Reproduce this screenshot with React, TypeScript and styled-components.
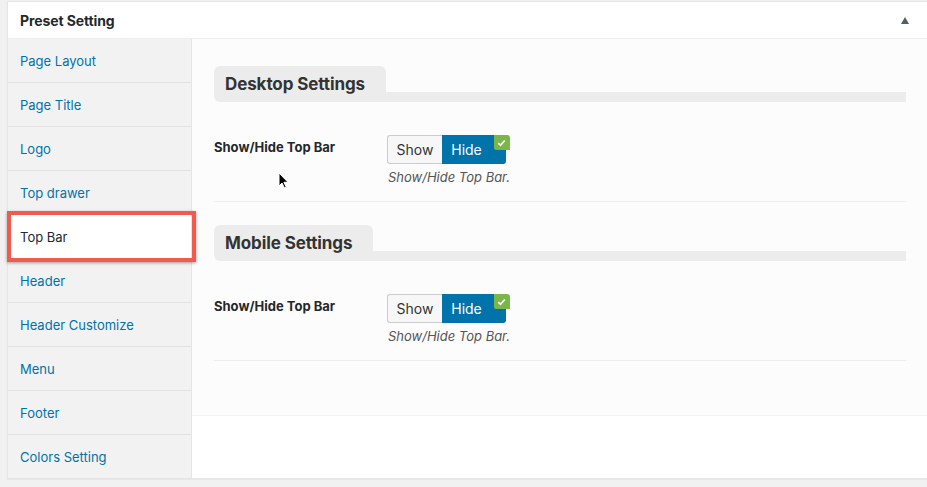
import React from "react";
import styled, { createGlobalStyle } from "styled-components";

const Global = createGlobalStyle`
  html, body { margin: 0; padding: 0; }
  body {
    background: #f1f1f1;
    font-family: Inter, "Liberation Sans", Arial, sans-serif;
    font-size: 13px;
    color: #23282d;
    overflow: hidden;
    width: 927px;
    height: 487px;
  }
`;

const Page = styled.div`
  padding: 1px 0 0 7px;
`;

const Panel = styled.div`
  width: 930px;
  background: #fff;
  border: 1px solid #e5e5e5;
  border-right: none;
  box-shadow: 0 1px 1px rgba(0, 0, 0, 0.04);
`;

const PanelHeader = styled.div`
  height: 36px;
  display: flex;
  align-items: center;
  justify-content: space-between;
  padding: 0 20px 0 12px;
  border-bottom: 1px solid #eee;
`;

const PanelTitle = styled.h2`
  margin: 0;
  font-size: 14px;
  font-weight: 700;
  color: #23282d;
  letter-spacing: -0.1px;
`;

const Toggle = styled.span`
  width: 0;
  height: 0;
  border-left: 4.5px solid transparent;
  border-right: 4.5px solid transparent;
  border-bottom: 7px solid #555d66;
  margin-right: 9px;
  margin-top: 1px;
`;

const Body = styled.div`
  display: flex;
  align-items: stretch;
`;

const Sidebar = styled.ul`
  list-style: none;
  margin: 0;
  padding: 0;
  width: 183px;
  flex: none;
  background: #f2f2f2;
  border-right: 1px solid #e5e5e5;
`;

const NavItem = styled.li<{ $active?: boolean }>`
  position: relative;
  height: 43px;
  display: flex;
  align-items: center;
  padding-left: 12px;
  border-bottom: 1px solid #e2e2e2;
  background: ${(p) => (p.$active ? "#fff" : "transparent")};
  color: ${(p) => (p.$active ? "#23282d" : "#0073aa")};
  font-size: 13px;
  &:last-child { border-bottom: none; }
`;

const Highlight = styled.span`
  position: absolute;
  z-index: 3;
  left: -1px;
  right: -5px;
  top: -4px;
  bottom: -4px;
  border: 4px solid #f25b4b;
  box-shadow: 0 1px 3px rgba(0, 0, 0, 0.35);
  pointer-events: none;
`;

const Main = styled.div`
  flex: 1;
  background: #fff;
`;

const Content = styled.div`
  position: relative;
  background: #fcfcfc;
  border-bottom: 1px solid #f3f3f3;
  padding: 27px 32px 54px 22px;
`;

const Section = styled.section`
  & + & { margin-top: 23px; }
`;

const Heading = styled.div`
  display: flex;
  align-items: flex-end;
  margin-bottom: 33px;
`;

const HeadingTab = styled.h3`
  margin: 0;
  height: 36px;
  line-height: 36px;
  padding: 0 21px 0 11px;
  background: #ececec;
  border-radius: 6px 6px 0 6px;
  font-size: 17px;
  font-weight: 700;
  color: #333;
  letter-spacing: -0.1px;
`;

const HeadingBar = styled.div`
  flex: 1;
  height: 10px;
  background: #ececec;
`;

const Row = styled.div`
  display: flex;
  align-items: flex-start;
  padding-bottom: 16px;
  border-bottom: 1px solid #eee;
`;

const Label = styled.div`
  width: 173px;
  font-weight: 700;
  font-size: 13px;
  color: #23282d;
  padding-top: 4px;
`;

const Field = styled.div`
  display: flex;
  flex-direction: column;
  gap: 5px;
`;

const ButtonGroup = styled.div`
  display: flex;
  position: relative;
  height: 29px;
`;

const SegButton = styled.button<{ $on?: boolean }>`
  font-family: inherit;
  font-size: 14px;
  height: 29px;
  margin: 0;
  cursor: pointer;
  border: 1px solid ${(p) => (p.$on ? "#0073aa" : "#ccc")};
  background: ${(p) => (p.$on ? "#0073aa" : "#f7f7f7")};
  color: ${(p) => (p.$on ? "#fff" : "#333")};
  width: ${(p) => (p.$on ? "64px" : "55px")};
  padding: ${(p) => (p.$on ? "0 14px 0 0" : "0")};
  border-radius: ${(p) => (p.$on ? "0 3px 3px 0" : "3px 0 0 3px")};
  ${(p) => (p.$on ? "border-left: none;" : "border-right: none;")}
`;

const Check = styled.span`
  position: absolute;
  top: 0;
  right: 0;
  width: 16px;
  height: 15px;
  background: #7ab648;
  border-radius: 0 3px 0 2px;
  display: flex;
  align-items: center;
  justify-content: center;
`;

const Description = styled.p`
  margin: 0;
  font-style: italic;
  font-size: 13px;
  color: #555;
  padding-left: 1px;
`;

const Cursor = styled.svg`
  position: absolute;
  left: 86px;
  top: 133px;
  width: 11px;
  height: 17px;
`;

const nav = [
  "Page Layout",
  "Page Title",
  "Logo",
  "Top drawer",
  "Top Bar",
  "Header",
  "Header Customize",
  "Menu",
  "Footer",
  "Colors Setting",
];

const ToggleField = () => (
  <Field>
    <ButtonGroup>
      <SegButton>Show</SegButton>
      <SegButton $on>Hide</SegButton>
      <Check>
        <svg width="9" height="8" viewBox="0 0 9 8">
          <path d="M1.2 4.2 L3.5 6.3 L7.8 1.5" fill="none" stroke="#fff" strokeWidth="1.8" />
        </svg>
      </Check>
    </ButtonGroup>
    <Description>Show/Hide Top Bar.</Description>
  </Field>
);

export default function App() {
  return (
    <>
      <Global />
      <Page>
        <Panel>
          <PanelHeader>
            <PanelTitle>Preset Setting</PanelTitle>
            <Toggle />
          </PanelHeader>
          <Body>
            <Sidebar>
              {nav.map((n) => (
                <NavItem key={n} $active={n === "Top Bar"}>
                  {n}
                  {n === "Top Bar" && <Highlight />}
                </NavItem>
              ))}
            </Sidebar>
            <Main>
              <Content>
                <Section>
                  <Heading>
                    <HeadingTab>Desktop Settings</HeadingTab>
                    <HeadingBar />
                  </Heading>
                  <Row>
                    <Label>Show/Hide Top Bar</Label>
                    <ToggleField />
                  </Row>
                </Section>
                <Section>
                  <Heading>
                    <HeadingTab>Mobile Settings</HeadingTab>
                    <HeadingBar />
                  </Heading>
                  <Row>
                    <Label>Show/Hide Top Bar</Label>
                    <ToggleField />
                  </Row>
                </Section>
                <Cursor viewBox="0 0 11 17">
                  <path d="M1 1 L1 14 L4 11 L6.5 16 L8.3 15.2 L5.9 10.3 L10 10.3 Z" fill="#000" stroke="#fff" strokeWidth="1" />
                </Cursor>
              </Content>
            </Main>
          </Body>
        </Panel>
      </Page>
    </>
  );
}
